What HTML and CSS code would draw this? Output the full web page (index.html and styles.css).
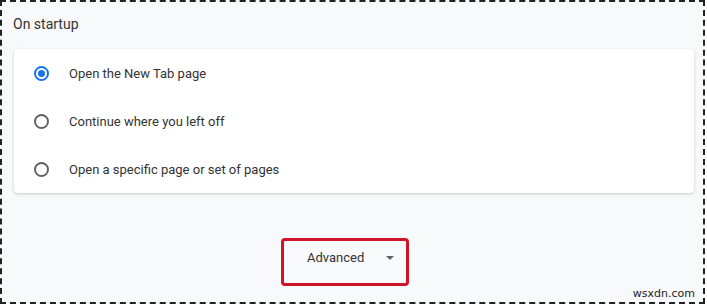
FILE: index.html
```html
<!DOCTYPE html>
<html lang="en">
<head>
  <meta charset="UTF-8">
  <title>On startup</title>
  <link rel="stylesheet" href="styles.css">
</head>
<body>
  <div class="marco">
    <h2 class="titulo">On startup</h2>

    <div class="tarjeta">
      <label class="opcion">
        <span class="radio activo"></span>
        <span class="texto">Open the New Tab page</span>
      </label>
      <label class="opcion">
        <span class="radio"></span>
        <span class="texto">Continue where you left off</span>
      </label>
      <label class="opcion">
        <span class="radio"></span>
        <span class="texto">Open a specific page or set of pages</span>
      </label>
    </div>

    <div class="avanzado">
      <button class="boton-avanzado">
        Advanced
        <span class="flecha"></span>
      </button>
    </div>

    <span class="marca">wsxdn.com</span>
  </div>
</body>
</html>
```

FILE: styles.css
```css
body {
  margin: 0;
  background: white;
  font-family: Roboto, "Noto Sans", Arial, sans-serif;
  color: #333;
}

.marco {
  position: relative;
  box-sizing: border-box;
  width: 705px;
  height: 304px;
  border: 2px dashed #222;
  background: #f8f9fa;
  padding: 12px 10px 0 11px;
}

.titulo {
  margin: 0 0 15px 0;
  font-size: 14px;
  font-weight: normal;
  line-height: 20px;
}

.tarjeta {
  margin-left: 1px;
  width: 680px;
  background: white;
  border-radius: 4px;
  box-shadow: 0 1px 3px rgba(60,64,67,0.25);
}

.opcion {
  display: flex;
  align-items: center;
  height: 48px;
  padding-left: 20px;
  font-size: 13px;
}

.radio {
  box-sizing: border-box;
  width: 15px;
  height: 15px;
  border: 2px solid #5f6368;
  border-radius: 50%;
  margin-right: 20px;
  display: flex;
  align-items: center;
  justify-content: center;
}

.radio.activo {
  border-color: #1a73e8;
}

.radio.activo::after {
  content: "";
  width: 7px;
  height: 7px;
  border-radius: 50%;
  background: #1a73e8;
}

.avanzado {
  display: flex;
  justify-content: center;
  padding-right: 16px;
  margin-top: 45px;
}

.boton-avanzado {
  box-sizing: border-box;
  width: 128px;
  height: 48px;
  border: 3px solid #d1132a;
  border-radius: 4px;
  background: transparent;
  font-family: Roboto, "Noto Sans", Arial, sans-serif;
  font-size: 13px;
  color: #333;
  display: flex;
  align-items: center;
  padding: 0 0 10px 23px;
}

.flecha {
  margin-left: 22px;
  margin-top: 2px;
  width: 0;
  height: 0;
  border-left: 4px solid transparent;
  border-right: 4px solid transparent;
  border-top: 4px solid #5f6368;
}

.marca {
  position: absolute;
  right: 8px;
  bottom: 2px;
  font-family: "DejaVu Sans", Verdana, sans-serif;
  font-size: 11px;
  color: #222;
}
```
